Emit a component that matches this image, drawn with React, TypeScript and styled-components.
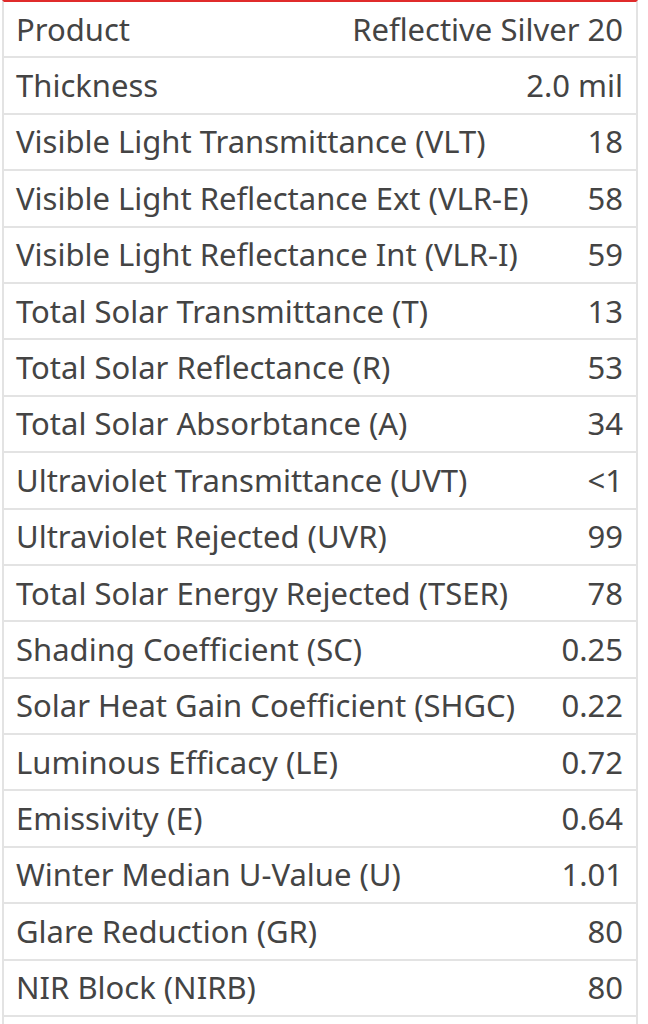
import React from 'react';
import styled, { createGlobalStyle } from 'styled-components';

const GlobalStyle = createGlobalStyle`
    html, body {
        margin: 0;
        padding: 0;
        background: #ffffff;
    }
    body {
        font-family: "Noto Sans", "Open Sans", sans-serif;
    }
`;

const Table = styled.div`
    display: flex;
    flex-direction: column;
    width: 636px;
    margin-left: 2px;
    border-top: 2px solid #e02b2b;
    border-left: 2px solid #e3e3e3;
    border-right: 2px solid #e3e3e3;
    box-sizing: border-box;
`;

const Row = styled.div`
    display: flex;
    align-items: center;
    justify-content: space-between;
    height: 56.4px;
    box-sizing: border-box;
    padding: 0 13px 0 12px;
    border-bottom: 2px solid #e3e3e3;
    font-size: 31px;
    line-height: 1.2;
    color: #444;
    white-space: nowrap;
`;

const Label = styled.span``;

const Value = styled.span`
    text-align: right;
`;

const specs: [string, string][] = [
    ['Product', 'Reflective Silver 20'],
    ['Thickness', '2.0 mil'],
    ['Visible Light Transmittance (VLT)', '18'],
    ['Visible Light Reflectance Ext (VLR-E)', '58'],
    ['Visible Light Reflectance Int (VLR-I)', '59'],
    ['Total Solar Transmittance (T)', '13'],
    ['Total Solar Reflectance (R)', '53'],
    ['Total Solar Absorbtance (A)', '34'],
    ['Ultraviolet Transmittance (UVT)', '<1'],
    ['Ultraviolet Rejected (UVR)', '99'],
    ['Total Solar Energy Rejected (TSER)', '78'],
    ['Shading Coefficient (SC)', '0.25'],
    ['Solar Heat Gain Coefficient (SHGC)', '0.22'],
    ['Luminous Efficacy (LE)', '0.72'],
    ['Emissivity (E)', '0.64'],
    ['Winter Median U-Value (U)', '1.01'],
    ['Glare Reduction (GR)', '80'],
    ['NIR Block (NIRB)', '80'],
    ['', ''],
];

const App: React.FC = () => (
    <>
        <GlobalStyle />
        <Table>
            {specs.map(([label, value], i) => (
                <Row key={i}>
                    <Label>{label}</Label>
                    <Value>{value}</Value>
                </Row>
            ))}
        </Table>
    </>
);

export default App;
